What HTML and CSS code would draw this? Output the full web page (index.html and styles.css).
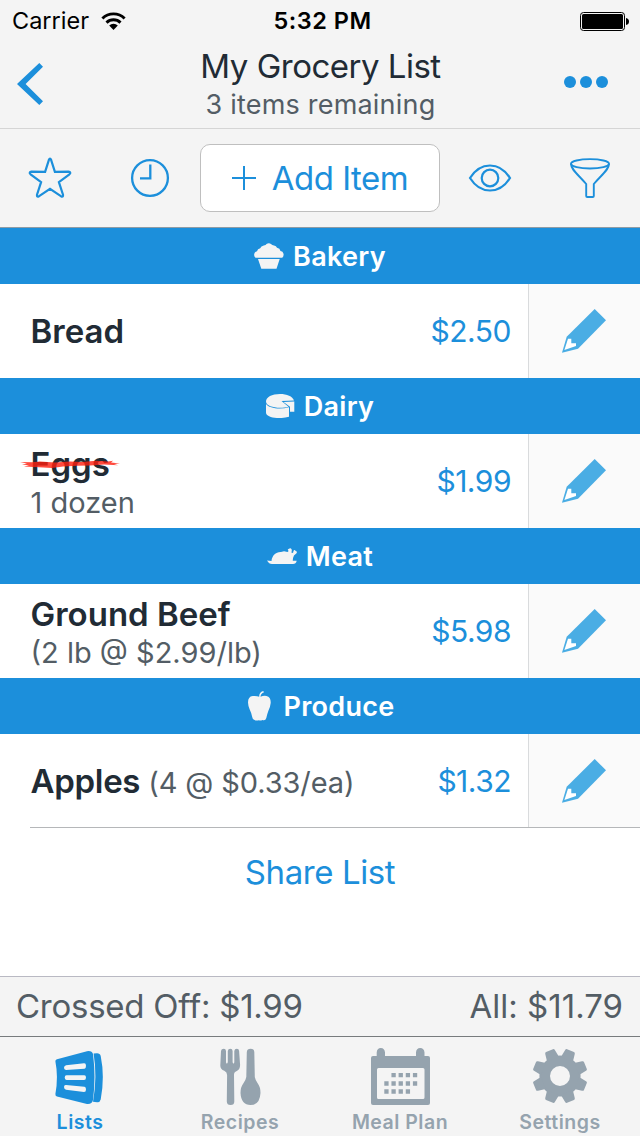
FILE: index.html
```
<!DOCTYPE html>
<html lang="en">
<head>
<meta charset="UTF-8">
<meta name="viewport" content="width=device-width, initial-scale=1.0">
<title>My Grocery List</title>
<link rel="stylesheet" href="styles.css">
</head>
<body>

<!-- shared pencil, used by every row -->
<svg class="defs" width="0" height="0">
    <symbol id="pencil" viewBox="0 0 44 44">
        <path fill="#4aade4" d="M32.7 0L44 11.3L16 39.7L0 43.8L4.7 27.7Z"/>
        <path fill="#fff" d="M6 29.7H9.3V34.3H14V37L2.4 40.9Z"/>
    </symbol>
</svg>

<div class="app">
    <div class="status">
        <div class="carrier">
            <span>Carrier</span>
            <svg width="25" height="19" viewBox="0 0 25 19">
                <path d="M1.4 6.5A15.6 15.6 0 0 1 23.6 6.5M5.5 10.6A9.9 9.9 0 0 1 19.5 10.6" fill="none" stroke="#000" stroke-width="2.9"/>
                <path d="M8.2 13.4A6.1 6.1 0 0 1 16.8 13.4L12.5 18Z"/>
            </svg>
        </div>
        <div class="time">5:32 PM</div>
        <svg class="battery" width="50" height="19" viewBox="0 0 50 19">
            <rect x=".5" y=".5" width="44" height="18" rx="3" fill="none" stroke="#000"/>
            <rect x="2" y="2" width="41" height="15" rx="1.5"/>
            <path d="M46 6Q49 6.5 49 9.5T46 13Z"/>
        </svg>
    </div>

    <div class="nav">
        <svg class="back" width="26" height="42" viewBox="0 0 26 42">
            <path d="M22.3 0L26 3.7L8.6 21L26 38.3L22.3 42L0 21Z" fill="#1c8fdb"/>
        </svg>
        <div class="heading">
            <div class="title">My Grocery List</div>
            <div class="subtitle">3 items remaining</div>
        </div>
        <svg class="more" width="44" height="12" viewBox="0 0 44 12" fill="#1c8fdb">
            <circle cx="6" cy="6" r="6"/>
            <circle cx="22" cy="6" r="6"/>
            <circle cx="38" cy="6" r="6"/>
        </svg>
    </div>

    <div class="toolbar">
        <svg width="44" height="44" viewBox="0 0 44 44">
            <path d="M20.9 3.8Q22 1.2 23.1 3.8L26.9 15.9L40.4 15.7Q43.6 16.3 41.4 18.3L30.9 26.2L35 38.7Q35.400 41.5 33.2 40.400L22 32.8L10.8 40.400Q8.600 41.5 9 38.700L13.100 26.200L2.600 18.300Q.4 16.300 3.600 15.700L17.100 15.900Z" stroke-width="2.200"/>
        </svg>
        <svg width="44" height="44" viewBox="0 0 44 44">
            <circle cx="22" cy="22" r="17.900" stroke-width="2.300"/>
            <path d="M22.300 8.500V22.400H12" stroke-width="2.300"/>
        </svg>
        <div class="add">
            <svg width="24" height="24" viewBox="0 0 24 24"><path d="M12 0V24M0 12H24" stroke-width="2"/></svg>
            <span>Add Item</span>
        </div>
        <svg width="44" height="44" viewBox="0 0 44 44">
            <path d="M2 22C7 14 14 9.500 22 9.500S37 14 42 22C37 30 30 34.500 22 34.500S7 30 2 22Z" stroke-width="2.200"/>
            <circle cx="22" cy="22" r="8.300" stroke-width="2.200"/>
        </svg>
        <svg width="44" height="44" viewBox="0 0 44 44">
            <ellipse cx="22" cy="7.800" rx="19" ry="4.700" stroke-width="1.900"/>
            <path d="M3 7.800C3 13.500 10 18.500 18.200 28V40Q18.200 41 19.200 41H24.800Q25.800 41 25.800 40V28C34 18.500 41 13.500 41 7.800" stroke-width="1.900"/>
        </svg>
    </div>

    <div class="list">
        <div class="category">
            <svg width="30" height="26" viewBox="0 0 30 26">
                <path d="M1.500 14.800Q-.5 13 .4 10.500Q1 8.500 3 8.300Q3.500 5.800 6.200 5.300Q7 3 9.800 2.500Q12 2 12.500 1Q15 -.8 17.300 1.300Q18 2.300 20 2.500Q22.300 3 23 4.700Q26 5.300 26.500 8Q29 8.400 29.500 10.700Q30 13.300 28.200 14.800ZM4 16H25.700L22.500 25.800H7.300Z"/>
            </svg>
            <span>Bakery</span>
        </div>
        <div class="item">
            <div class="info"><div class="name">Bread</div></div>
            <div class="price">$2.50</div>
            <div class="edit"><svg width="44" height="44"><use href="#pencil"/></svg></div>
        </div>

        <div class="category">
            <svg width="29" height="24" viewBox="0 0 29 24">
                <path d="M0 7.500C0 3 6 0 14 0C21 0 26.500 2.300 28 6.500L15.500 7L22.500 12.700C14 15 0 13.500 0 7.500ZM0 10C3 14.500 14 15.600 23 13.300V22.700C14 25.500 0 24 0 18.500ZM17.500 7.900L28.300 7.500V17.700H24V12.700Z"/>
            </svg>
            <span>Dairy</span>
        </div>
        <div class="item">
            <div class="info double">
                <div class="name crossed">Eggs
                    <svg class="strike" width="100" height="9" viewBox="0 0 100 9">
                        <path d="M0 2L12 2.300L20 1.500L35 2.400L50 1.600L62 2L76 .8L88 1.500L93 .7L91 2.400L100 3.400L94 4L98 5.200L84 4.500L70 5.400L57 5.700L43 6.400L32 8L19 7.300L4 6.400L9 5.200L2 4.500L7 3.500Z"/>
                    </svg>
                </div>
                <div class="detail">1 dozen</div>
            </div>
            <div class="price">$1.99</div>
            <div class="edit"><svg width="44" height="44"><use href="#pencil"/></svg></div>
        </div>

        <div class="category">
            <svg width="30" height="17" viewBox="0 0 30 17">
                <path d="M0 12.500L4.500 13C5 7.500 9 3.700 14 4L17 3.200L20.500 4L21.700 3Q19.700 1.500 22 .8Q23.500 -.5 24.700 1.500Q25 3.500 24.300 4.500L26 5L26.500 3Q27.300 1 28.700 3Q30.700 3.500 29.500 5.200L27 7.500Q25.700 10 25.800 12.700H29.700Q29 16 26 16H5Q2 16 0 12.500Z"/>
            </svg>
            <span>Meat</span>
        </div>
        <div class="item">
            <div class="info double">
                <div class="name">Ground Beef</div>
                <div class="detail">(2 lb @ $2.99/lb)</div>
            </div>
            <div class="price">$5.98</div>
            <div class="edit"><svg width="44" height="44"><use href="#pencil"/></svg></div>
        </div>

        <div class="category">
            <svg class="apple" width="23" height="30" viewBox="0 0 23 30">
                <path d="M11.200 5.700Q11 1.500 15.200 0L16 1.200Q12.700 2.500 12.500 5.700Q15.500 4.500 18.500 5Q23 6 22.700 12Q22.300 16 20.500 19.500Q19 23.500 18.300 27Q17.500 30 14.500 29Q12 30 11 29.200Q8 30 6.500 29Q4.500 28.500 4.200 26Q3.500 22 1.700 18.500Q.2 15.500 0 11.500Q0 5.500 4.700 5Q8.500 4.600 11.200 5.700Z"/>
            </svg>
            <span>Produce</span>
        </div>
        <div class="item last">
            <div class="info inline">
                <span class="name">Apples</span>
                <span class="detail">(4 @ $0.33/ea)</span>
            </div>
            <div class="price">$1.32</div>
            <div class="edit"><svg width="44" height="44"><use href="#pencil"/></svg></div>
        </div>

        <div class="share">Share List</div>
    </div>

    <div class="totals">
        <span class="crossed-off">Crossed Off: $1.99</span>
        <span>All: $11.79</span>
    </div>

    <div class="tabs">
        <div class="tab active">
            <svg width="50" height="58" viewBox="0 0 50 58">
                <path fill-rule="evenodd" d="M2 11.200L32 3.200Q37 2.500 38 6Q41 29 38 52Q37 56.500 32 56L2 48.500Q.2 48 .4 46Q3.500 29 .4 13.500Q.2 11.800 2 11.200ZM11 17.200Q9 17.700 9 19.700T11 22L29.500 20.700Q31 20.300 31 17.700T29 15.300ZM11.500 27.200Q9.700 27.200 9.700 29.500T11.500 32H29Q31 32 31 29.500T29 27.200ZM11 37Q9 36.800 9 39T11 41.700L29 44Q31 44 31 41.500T29.500 38.700Z"/>
                <path d="M38.600 5.500L42 5.300Q45 5.300 45.700 8Q50 29 45.700 51.500Q45 54.500 42 54.200L38 53.700Q42.500 29 38.600 5.500Z"/>
            </svg>
            <span>Lists</span>
        </div>
        <div class="tab">
            <svg width="42" height="58" viewBox="-.8 0 42 58">
                <path d="M1.200 3Q1.500 .7 4 .7Q6 .7 6.200 3V14Q6.300 15.500 7 15.500T8 14V3Q8.300 .7 10.500 .7T12.800 3V14Q13 15.500 13.700 15.500T14.500 14V3Q14.800 .7 17 .7T19.300 3L20.300 17Q20.300 21.500 17 23Q14 24 14.200 27L14.500 53.500Q14.500 57 10.800 57T7 53.500L7.300 27Q7.300 24 4.500 22.800Q.5 21.500 .5 17.500Z"/>
                <path d="M27 4Q27.300 .7 30.800 .7T34.500 4L35 29Q35.500 32 38 35.500Q40.700 39 40.700 45Q40 57 30.700 57T20.700 45Q20.700 39 23.500 35.500Q26 32 26.500 29Z"/>
            </svg>
            <span>Recipes</span>
        </div>
        <div class="tab">
            <svg width="59" height="58" viewBox="0 0 59 58">
                <path fill-rule="evenodd" d="M2 8H5.700V4.500Q6 0 9.800 0T14 4.500V8H45V4.500Q45.300 0 49.200 0T53.500 4.500V8H57Q59 8 59 10V55Q59 57 57 57H2Q0 57 0 55V10Q0 8 2 8ZM7.500 20Q6 20 6 21.500V49.500Q6 51 7.500 51H52Q53.500 51 53.500 49.500V21.500Q53.500 20 52 20Z"/>
                <path d="M20.450 27.200H46.200M13.300 35.500H46.200M13.300 43.500H39.100" stroke="#95a3ae" stroke-width="4.300" stroke-dasharray="4.300 2.850"/>
            </svg>
            <span>Meal Plan</span>
        </div>
        <div class="tab">
            <svg width="58" height="58" viewBox="-29 -28 58 58">
                <circle r="15.300" fill="none" stroke="#95a3ae" stroke-width="10.600"/>
                <path id="tooth" transform="rotate(22.5)" d="M-6.500 -18L-5.200 -26Q-5 -27.500 -3.700 -27.500H3.700Q5 -27.500 5.200 -26L6.500 -18Z"/>
                <use href="#tooth" transform="rotate(45)"/>
                <use href="#tooth" transform="rotate(90)"/>
                <use href="#tooth" transform="rotate(135)"/>
                <use href="#tooth" transform="rotate(180)"/>
                <use href="#tooth" transform="rotate(225)"/>
                <use href="#tooth" transform="rotate(270)"/>
                <use href="#tooth" transform="rotate(315)"/>
            </svg>
            <span>Settings</span>
        </div>
    </div>
</div>

</body>
</html>
```
FILE: styles.css
```
* {
    box-sizing: border-box;
}
body {
    margin: 0;
    font-family: Inter, "Liberation Sans", sans-serif;
    background-color: #fff;
    color: #212b35;
}
svg {
    display: block;
    flex: none;
}
.defs {
    display: none;
}
.app {
    display: flex;
    flex-direction: column;
    width: 640px;
    height: 1136px;
    overflow: hidden;
    white-space: nowrap;
}
.status {
    display: grid;
    grid-template-columns: 1fr 120px 1fr;
    align-items: center;
    height: 40px;
    padding: 1px 10px 0 12px;
    background-color: #f4f4f4;
    color: #000;
    font-size: 23.5px;
    line-height: 40px;
}
.carrier {
    display: flex;
    align-items: center;
    gap: 12px;
}
.time {
    padding-left: 3px;
    font-weight: 600;
    letter-spacing: .5px;
    text-align: center;
}
.battery {
    justify-self: end;
}
.nav {
    display: grid;
    grid-template-columns: 60px 1fr 60px;
    height: 89px;
    padding: 0 16px 0 17px;
    background-color: #f4f4f4;
    border-bottom: 1px solid #d5d5d5;
}
.back {
    margin-top: 23px;
}
.more {
    margin-top: 36px;
}
.heading {
    text-align: center;
}
.title {
    margin-top: 6px;
    font-size: 33px;
    line-height: 40px;
    letter-spacing: -.5px;
}
.subtitle {
    font-size: 27px;
    line-height: 38px;
    letter-spacing: .2px;
    color: #535d65;
}
.toolbar {
    display: grid;
    grid-template-columns: 100px 100px 240px 100px 100px;
    align-items: center;
    justify-items: center;
    height: 99px;
    background-color: #f4f4f4;
    border-bottom: 1px solid #8e9ba5;
}
.toolbar svg {
    fill: none;
    stroke: #1c8fdb;
}
.add {
    display: flex;
    align-items: center;
    justify-content: center;
    gap: 16px;
    width: 240px;
    height: 68px;
    background-color: #fff;
    border: 1px solid #bfbfbf;
    border-radius: 10px;
    color: #1c8fdb;
    font-size: 33px;
    letter-spacing: -.5px;
}
.list {
    flex: 1;
}
.category {
    display: flex;
    align-items: center;
    justify-content: center;
    gap: 9px;
    height: 56px;
    background-color: #1c8fdb;
    color: #fff;
    font-size: 27px;
    font-weight: 600;
    letter-spacing: .3px;
}
.category svg {
    fill: #f4f4f4;
}
.category .apple {
    margin: 0 3px;
}
.item {
    display: flex;
    height: 94px;
}
.info {
    flex: 1;
    display: flex;
    flex-direction: column;
    justify-content: center;
    padding-left: 30.5px;
}
.double {
    padding-top: 2px;
}
.inline {
    flex-direction: row;
    justify-content: flex-start;
    align-items: baseline;
    gap: 8px;
    padding-top: 27px;
}
.name {
    font-size: 33px;
    line-height: 40px;
    font-weight: 600;
}
.inline .name {
    letter-spacing: -.3px;
}
.inline .detail {
    letter-spacing: -.1px;
}
.crossed {
    position: relative;
}
.strike {
    position: absolute;
    left: -11px;
    top: 16px;
    fill: #ff1e0e;
    opacity: .8;
}
.detail {
    font-size: 29px;
    line-height: 37px;
    color: #535d65;
}
.price {
    padding-right: 17px;
    color: #1c8fdb;
    font-size: 30px;
    line-height: 94px;
    letter-spacing: -.5px;
}
.edit {
    width: 112px;
    padding: 25px 0 0 33px;
    background-color: #fafafa;
    border-left: 1px solid #d9dbdd;
}
.last {
    margin-left: 30px;
    border-bottom: 1px solid #b5b7b9;
}
.last .info {
    padding-left: .5px;
}
.share {
    height: 88px;
    color: #1c8fdb;
    font-size: 33px;
    line-height: 88px;
    letter-spacing: -.4px;
    text-align: center;
}
.totals {
    display: flex;
    justify-content: space-between;
    height: 60px;
    padding: 0 17px 0 16px;
    background-color: #f4f4f4;
    border-top: 1px solid #b9b9c3;
    color: #535d65;
    font-size: 33px;
    line-height: 59px;
}
.crossed-off {
    letter-spacing: -.25px;
}
.tabs {
    display: grid;
    grid-template-columns: repeat(4, 160px);
    height: 100px;
    background-color: #f4f4f4;
    border-top: 1px solid #777b7d;
}
.tab {
    display: flex;
    flex-direction: column;
    align-items: center;
    gap: 4px;
    padding-top: 11px;
    color: #95a3ae;
    fill: #95a3ae;
    font-size: 19.5px;
    line-height: 24px;
    font-weight: 600;
    letter-spacing: .5px;
}
.active {
    color: #1c8fdb;
    fill: #1c8fdb;
}
```
